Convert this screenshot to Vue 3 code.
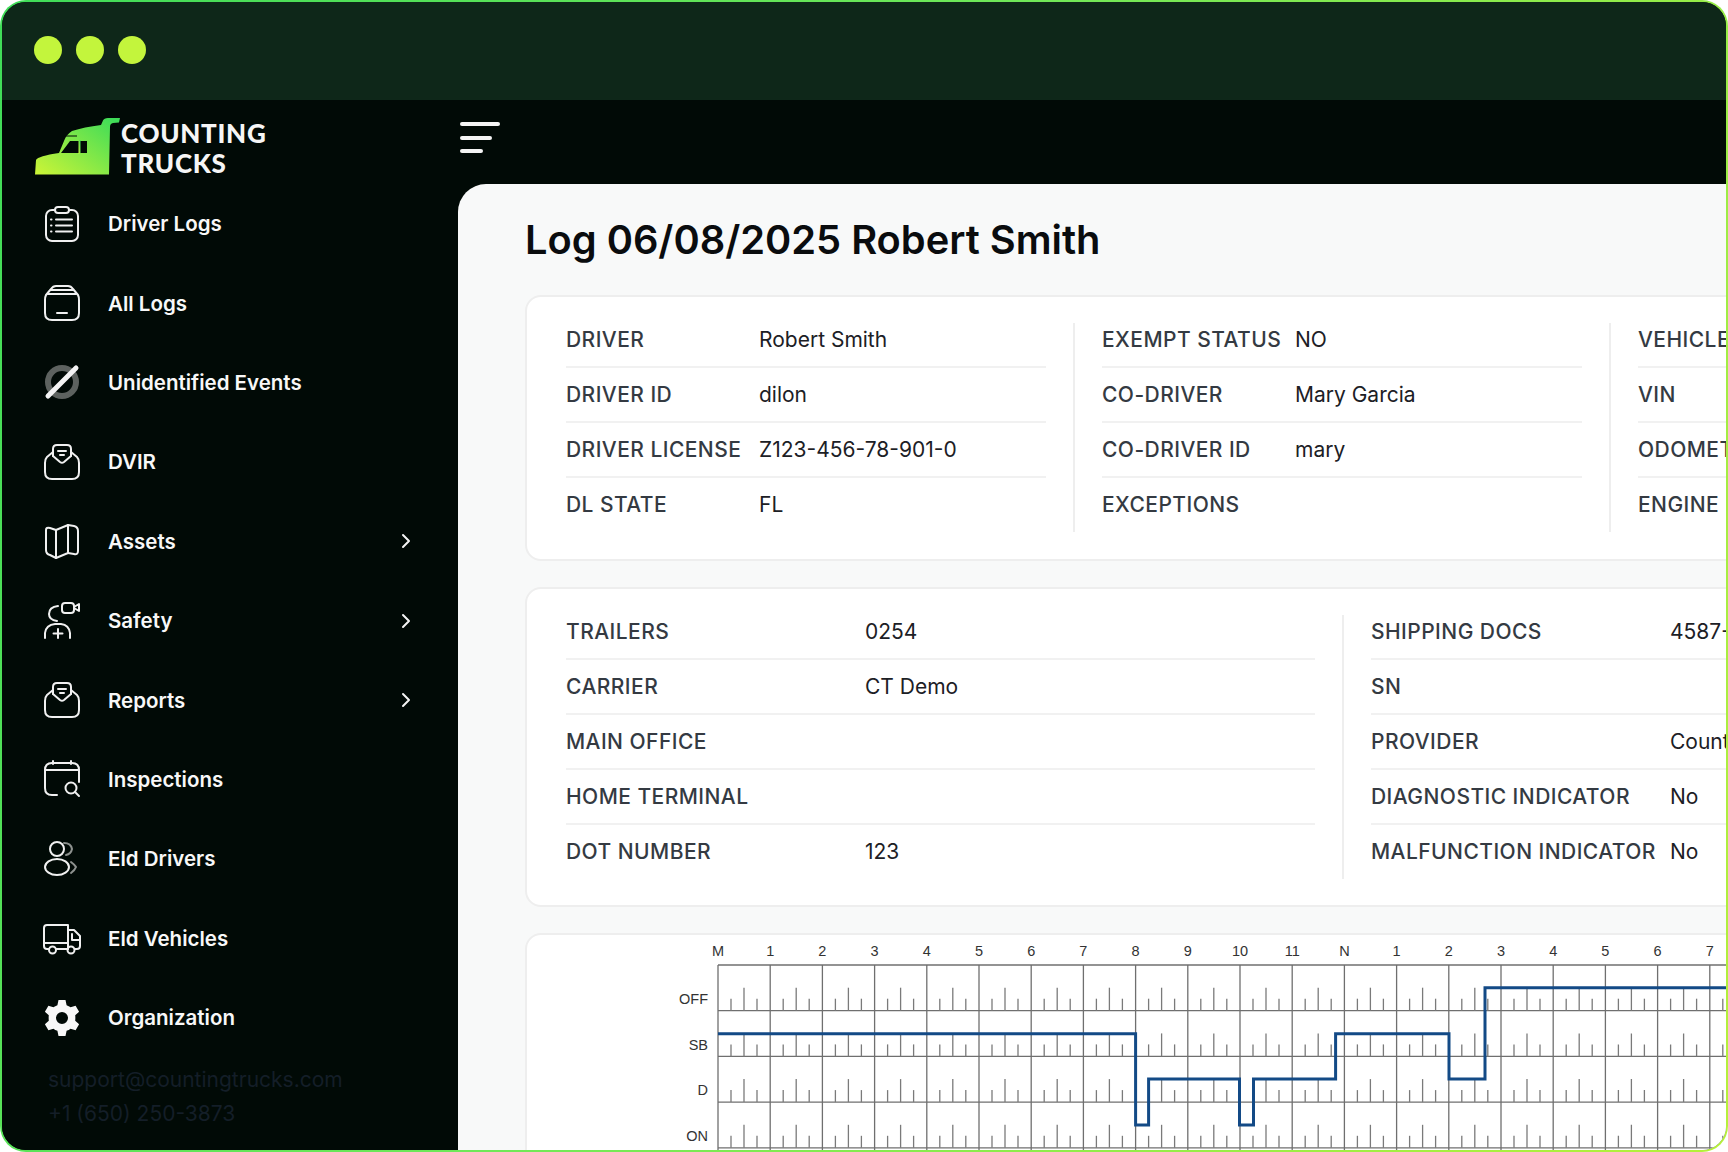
<script setup>
const navItems = [
  { label: 'Driver Logs', icon: 'clipboard' },
  { label: 'All Logs', icon: 'box' },
  { label: 'Unidentified Events', icon: 'slash' },
  { label: 'DVIR', icon: 'inbox' },
  { label: 'Assets', icon: 'map', arrow: true },
  { label: 'Safety', icon: 'safety', arrow: true },
  { label: 'Reports', icon: 'inbox', arrow: true },
  { label: 'Inspections', icon: 'calendar' },
  { label: 'Eld Drivers', icon: 'users' },
  { label: 'Eld Vehicles', icon: 'truck' },
  { label: 'Organization', icon: 'gear' }
]

const driverCols = [
  [['DRIVER', 'Robert Smith'], ['DRIVER ID', 'dilon'], ['DRIVER LICENSE', 'Z123-456-78-901-0'], ['DL STATE', 'FL']],
  [['EXEMPT STATUS', 'NO'], ['CO-DRIVER', 'Mary Garcia'], ['CO-DRIVER ID', 'mary'], ['EXCEPTIONS', '']],
  [['VEHICLE', ''], ['VIN', ''], ['ODOMETER', ''], ['ENGINE HOURS', '']]
]

const carrierCols = [
  [['TRAILERS', '0254'], ['CARRIER', 'CT Demo'], ['MAIN OFFICE', ''], ['HOME TERMINAL', ''], ['DOT NUMBER', '123']],
  [['SHIPPING DOCS', '4587-A'], ['SN', ''], ['PROVIDER', 'Counting Trucks'], ['DIAGNOSTIC INDICATOR', 'No'], ['MALFUNCTION INDICATOR', 'No']]
]

const chartLeft = 191
const chartTop = 30
const hourW = 52.2
const rowH = 45.7
const rows = ['OFF', 'SB', 'D', 'ON']
const hourLabels = ['M', '1', '2', '3', '4', '5', '6', '7', '8', '9', '10', '11', 'N', '1', '2', '3', '4', '5', '6', '7']

const hours = hourLabels.map((label, i) => ({ label, x: chartLeft + i * hourW }))

const ticks = []
rows.forEach((r, ri) => {
  const bottom = chartTop + (ri + 1) * rowH
  hourLabels.forEach((l, h) => {
    const x = chartLeft + h * hourW
    ticks.push({ x: x + 13, y1: bottom, y2: bottom - 12 })
    ticks.push({ x: x + 26, y1: bottom, y2: bottom - 23 })
    ticks.push({ x: x + 39, y1: bottom, y2: bottom - 12 })
  })
})

const statusPath = 'M191,98.7 H608.6 V190 H621.6 V144 H712.5 V190 H726.5 V144 H808.6 V98.7 H922 V144 H958 V52.7 H1210'
</script>

<template>
  <div class="frame">
    <div class="window">
      <div class="titlebar">
        <span class="dot"></span>
        <span class="dot"></span>
        <span class="dot"></span>
      </div>

      <div class="body">
        <aside class="sidebar">
          <div class="logo">
            <svg class="logo__truck" width="86" height="58" viewBox="35 118 86 58">
              <defs>
                <linearGradient id="truckFill" x1="0" y1="1" x2="1" y2="0.1">
                  <stop offset="0" stop-color="#cdf536" />
                  <stop offset="1" stop-color="#3edc58" />
                </linearGradient>
              </defs>
              <path fill="url(#truckFill)" fill-rule="evenodd" d="M35,174.5 L36,160 Q38,156 59,153 L64,141 Q66,135 72,131 Q84,127 101,125 L103,120.5 Q104,118 108,118 L120,118 L119,122.5 L113,123 Q110,123.5 110,127 L109,174.5 Z M61,153 L87,153 L87,141 L70,141 Z" />
              <path fill="url(#truckFill)" d="M78.5,140 H80.5 V154 H78.5 Z" />
              <path stroke="#010a06" stroke-width="1" fill="none" d="M65,136 L77,136" />
            </svg>
            <div class="logo__text">COUNTING<br />TRUCKS</div>
          </div>

          <nav class="nav">
            <div v-for="item in navItems" :key="item.label" class="nav__item">
              <svg class="nav__icon" width="38" height="38" viewBox="0 0 38 38" fill="none" stroke="#f0f0f0" stroke-width="2" stroke-linecap="round" stroke-linejoin="round">
                <template v-if="item.icon === 'clipboard'">
                  <rect x="3" y="5" width="32" height="31" rx="6" />
                  <rect x="12" y="2" width="14" height="6" rx="3" fill="#010a06" />
                  <path d="M13 14.5H29M13 20.5H29M13 26.5H29M8 14.5H8.5M8 20.5H8.5M8 26.5H8.5" />
                </template>
                <template v-else-if="item.icon === 'box'">
                  <path d="M13 2H25Q28 2 30 5L35 11Q36 13 36 16V29Q36 36 29 36H9Q2 36 2 29V16Q2 13 3 11L8 5Q10 2 13 2Z" />
                  <path d="M8 6H30M5 10H33" />
                  <path d="M14 29H24" />
                </template>
                <template v-else-if="item.icon === 'slash'">
                  <circle cx="19" cy="19" r="14" stroke="#5d625f" stroke-width="6" />
                  <path d="M5 33L33 5" stroke="#f4f4f4" stroke-width="5" stroke-linecap="round" />
                </template>
                <template v-else-if="item.icon === 'inbox'">
                  <path d="M10 13V6Q10 2 14 2H24Q28 2 28 6V13" />
                  <path d="M10 13L17 19Q19 20.5 21 19L28 13" />
                  <path d="M10 9L4 14Q2 16 2 20V29Q2 36 9 36H29Q36 36 36 29V20Q36 16 34 14L28 9" />
                  <path d="M15 8H23M17 12H21" />
                </template>
                <template v-else-if="item.icon === 'map'">
                  <path d="M3 8Q3 5 7 6L13 8V36L7 33Q3 32 3 28Z" />
                  <path d="M13 8L25 3V31L13 36Z" />
                  <path d="M25 3L31 4Q35 5 35 9V29Q35 33 31 32L25 31" />
                </template>
                <template v-else-if="item.icon === 'safety'">
                  <path d="M15 4Q6 5 6 12Q6 18 14 19" />
                  <rect x="19" y="1" width="12" height="10" rx="3" />
                  <path d="M31 5L36 2V9L31 6" />
                  <path d="M2 36V31Q3 23 12 22H18Q26 23 27 31V36" />
                  <path d="M15 27V36M10.5 31.5H19.5" />
                </template>
                <template v-else-if="item.icon === 'calendar'">
                  <path d="M14 35H9Q2 35 2 28V10Q2 3 9 3H29Q36 3 36 10V22" />
                  <path d="M2 10H36M10 1V4M28 1V4" />
                  <circle cx="28" cy="28" r="5.5" />
                  <path d="M32 32L36 36" />
                </template>
                <template v-else-if="item.icon === 'users'">
                  <circle cx="14" cy="9" r="7" />
                  <path d="M21 3Q28 3 29 9Q28 14 23 15" stroke="#8d918e" />
                  <ellipse cx="14" cy="27" rx="12" ry="8" />
                  <path d="M28 22Q32 25 33 27Q32 30 28 33" stroke="#8d918e" />
                </template>
                <template v-else-if="item.icon === 'truck'">
                  <path d="M6 30H4Q1 30 1 27V9Q1 6 4 6H25V30H13" />
                  <path d="M25 11H31L37 17V27Q37 30 34 30H32M24 30H25" />
                  <path d="M1 24H25M29 15V21H37" />
                  <circle cx="9.5" cy="31" r="3.5" />
                  <circle cx="28" cy="31" r="3.5" />
                </template>
                <template v-else-if="item.icon === 'gear'">
                  <path fill="#f8f8f8" stroke="none" fill-rule="evenodd" d="M15.5 1H22.5L23.6 6.2Q25.8 7 27.6 8.3L32.6 6.7L36.1 12.8L32.2 16.3Q32.5 19 32.2 21.7L36.1 25.2L32.6 31.3L27.6 29.7Q25.8 31 23.6 31.8L22.5 37H15.5L14.4 31.8Q12.2 31 10.4 29.7L5.4 31.3L1.9 25.2L5.8 21.7Q5.5 19 5.8 16.3L1.9 12.8L5.4 6.7L10.4 8.3Q12.2 7 14.4 6.2ZM19 13A6 6 0 1 0 19 25A6 6 0 1 0 19 13Z" />
                </template>
              </svg>
              <span class="nav__label">{{ item.label }}</span>
              <svg v-if="item.arrow" class="nav__arrow" width="10" height="16" viewBox="0 0 10 16" fill="none" stroke="#f4f4f4" stroke-width="2" stroke-linecap="round" stroke-linejoin="round">
                <path d="M2 2L8 8L2 14" />
              </svg>
            </div>
          </nav>

          <div class="support">
            <div>support@countingtrucks.com</div>
            <div>+1 (650) 250-3873</div>
          </div>
        </aside>

        <div class="content">
          <div class="topbar">
            <div class="burger">
              <span class="burger__line burger__line--a"></span>
              <span class="burger__line burger__line--b"></span>
              <span class="burger__line burger__line--c"></span>
            </div>
          </div>

          <main class="panel">
            <h1 class="panel__title">Log 06/08/2025 Robert Smith</h1>

            <section class="card card--info card--driver">
              <div v-for="(col, i) in driverCols" :key="i" class="col col--driver">
                <div v-for="row in col" :key="row[0]" class="row">
                  <span class="row__label row__label--driver">{{ row[0] }}</span>
                  <span class="row__value">{{ row[1] }}</span>
                </div>
              </div>
            </section>

            <section class="card card--info">
              <div v-for="(col, i) in carrierCols" :key="i" class="col col--carrier">
                <div v-for="row in col" :key="row[0]" class="row">
                  <span class="row__label row__label--carrier">{{ row[0] }}</span>
                  <span class="row__value">{{ row[1] }}</span>
                </div>
              </div>
            </section>

            <section class="card card--chart">
              <svg class="chart" width="1210" height="240" viewBox="0 0 1210 240">
                <text v-for="(h, i) in hours" :key="'h' + i" class="chart__hour" :x="h.x" y="21" text-anchor="middle">{{ h.label }}</text>
                <text v-for="(r, i) in rows" :key="r" class="chart__row" x="181" :y="chartTop + i * rowH + 39" text-anchor="end">{{ r }}</text>
                <line :x1="chartLeft" :y1="chartTop" x2="1210" :y2="chartTop" class="chart__line" />
                <line v-for="(r, i) in rows" :key="'l' + r" :x1="chartLeft" :y1="chartTop + (i + 1) * rowH" x2="1210" :y2="chartTop + (i + 1) * rowH" class="chart__line" />
                <line v-for="(h, i) in hours" :key="'v' + i" :x1="h.x" :y1="chartTop" :x2="h.x" y2="240" class="chart__line" />
                <line v-for="(t, i) in ticks" :key="'t' + i" :x1="t.x" :y1="t.y1" :x2="t.x" :y2="t.y2" class="chart__tick" />
                <path :d="statusPath" class="chart__status" />
              </svg>
            </section>
          </main>
        </div>
      </div>
    </div>
  </div>
</template>

<style>
html, body {
  margin: 0;
  background: #ffffff;
}
</style>

<style scoped>
.frame {
  width: 1728px;
  height: 1152px;
  box-sizing: border-box;
  padding: 2px;
  border-radius: 26px;
  background: linear-gradient(115deg, #3fdc58 0%, #6fe858 45%, #b6f03a 100%);
  overflow: hidden;
  font-family: "Inter", "Liberation Sans", sans-serif;
}

.window {
  height: 100%;
  border-radius: 24px;
  overflow: hidden;
  display: flex;
  flex-direction: column;
  background: #010a06;
}

.titlebar {
  flex: none;
  height: 98px;
  box-sizing: border-box;
  padding: 0 0 2px 32px;
  display: flex;
  align-items: center;
  gap: 14px;
  background: #0e2719;
}

.dot {
  width: 28px;
  height: 28px;
  border-radius: 50%;
  background: #c3f53c;
}

.body {
  flex: 1;
  min-height: 0;
  display: flex;
}

.sidebar {
  flex: none;
  width: 456px;
  display: flex;
  flex-direction: column;
  background: #010a06;
}

.logo {
  height: 84px;
  flex: none;
  display: flex;
  align-items: flex-start;
  padding: 18px 0 0 33px;
  box-sizing: border-box;
}

.logo__text {
  margin: 1px 0 0 0;
  color: #f6f6f6;
  font-family: "Lato", sans-serif;
  font-weight: 900;
  font-size: 26px;
  letter-spacing: 0.7px;
  line-height: 29.5px;
}

.nav__item {
  height: 79.4px;
  display: flex;
  align-items: center;
  padding-left: 41px;
  color: #f8f8f8;
}

.nav__icon {
  flex: none;
  margin-right: 27px;
}

.nav__label {
  font-size: 20.5px;
  font-weight: 600;
}

.nav__arrow {
  margin-left: auto;
  margin-right: 47px;
}

.support {
  padding: 6px 0 0 46px;
  color: #141e28;
  font-family: "Inter", sans-serif;
  font-size: 21px;
  line-height: 34px;
}

.content {
  flex: 1;
  min-width: 0;
  display: flex;
  flex-direction: column;
}

.topbar {
  flex: none;
  height: 84px;
  padding: 22px 0 0 2px;
  box-sizing: border-box;
}

.burger {
  display: flex;
  flex-direction: column;
  gap: 9.5px;
}

.burger__line {
  display: block;
  height: 4px;
  border-radius: 2px;
  background: #f4f4f4;
}

.burger__line--a { width: 40px; }
.burger__line--b { width: 32px; }
.burger__line--c { width: 23px; }

.panel {
  flex: 1;
  min-height: 0;
  padding-left: 67px;
  border-top-left-radius: 28px;
  background: #f8f9f9;
  overflow: hidden;
}

.panel__title {
  margin: 32px 0 31px;
  color: #0a0c0e;
  font-size: 39.8px;
  line-height: 48px;
  font-weight: 600;
  white-space: nowrap;
}

.card {
  width: 1400px;
  box-sizing: border-box;
  margin-bottom: 26px;
  border: 2px solid #eeeeee;
  border-radius: 16px;
  background: #ffffff;
}

.card--info {
  display: flex;
  padding: 26px 0 26px 39px;
}

.card--driver {
  padding-bottom: 27px;
}

.col {
  flex: none;
  box-sizing: border-box;
  margin-right: 27px;
  padding-right: 27px;
  border-right: 2px solid #eeeeee;
}

.col:last-child {
  border-right: none;
}

.col--driver { width: 509px; }
.col--carrier { width: 778px; }

.row {
  display: flex;
  padding: 10px 0;
  border-bottom: 2px solid #f1f1f1;
  line-height: 33px;
  font-size: 21px;
  white-space: nowrap;
}

.row:first-child { padding-top: 0; }
.row:last-child { padding-bottom: 11px; border-bottom: none; }

.row__label {
  flex: none;
  color: #343a42;
  font-weight: 500;
  letter-spacing: 0.45px;
}

.row__label--driver { width: 193px; }
.row__label--carrier { width: 299px; }

.row__value {
  color: #1c2025;
}

.card--chart {
  height: 400px;
}

.chart {
  display: block;
}

.chart__hour,
.chart__row {
  font-family: "Liberation Sans", sans-serif;
  font-size: 14.5px;
  fill: #333333;
}

.chart__line {
  stroke: #6f6f6f;
  stroke-width: 1.3;
}

.chart__tick {
  stroke: #7a7a7a;
  stroke-width: 1.3;
}

.chart__status {
  fill: none;
  stroke: #134a86;
  stroke-width: 3;
}
</style>
